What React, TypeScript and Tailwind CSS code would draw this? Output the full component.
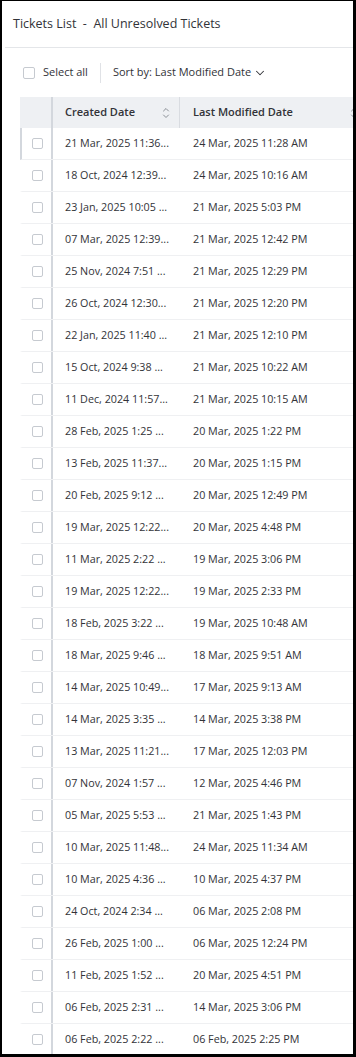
import { ChevronDown } from "lucide-react";

// created date is shown cut off in the list, as in the app
const rows: [string, string][] = [
  ["21 Mar, 2025 11:36...", "24 Mar, 2025 11:28 AM"],
  ["18 Oct, 2024 12:39...", "24 Mar, 2025 10:16 AM"],
  ["23 Jan, 2025 10:05 ...", "21 Mar, 2025 5:03 PM"],
  ["07 Mar, 2025 12:39...", "21 Mar, 2025 12:42 PM"],
  ["25 Nov, 2024 7:51 ...", "21 Mar, 2025 12:29 PM"],
  ["26 Oct, 2024 12:30...", "21 Mar, 2025 12:20 PM"],
  ["22 Jan, 2025 11:40 ...", "21 Mar, 2025 12:10 PM"],
  ["15 Oct, 2024 9:38 ...", "21 Mar, 2025 10:22 AM"],
  ["11 Dec, 2024 11:57...", "21 Mar, 2025 10:15 AM"],
  ["28 Feb, 2025 1:25 ...", "20 Mar, 2025 1:22 PM"],
  ["13 Feb, 2025 11:37...", "20 Mar, 2025 1:15 PM"],
  ["20 Feb, 2025 9:12 ...", "20 Mar, 2025 12:49 PM"],
  ["19 Mar, 2025 12:22...", "20 Mar, 2025 4:48 PM"],
  ["11 Mar, 2025 2:22 ...", "19 Mar, 2025 3:06 PM"],
  ["19 Mar, 2025 12:22...", "19 Mar, 2025 2:33 PM"],
  ["18 Feb, 2025 3:22 ...", "19 Mar, 2025 10:48 AM"],
  ["18 Mar, 2025 9:46 ...", "18 Mar, 2025 9:51 AM"],
  ["14 Mar, 2025 10:49...", "17 Mar, 2025 9:13 AM"],
  ["14 Mar, 2025 3:35 ...", "14 Mar, 2025 3:38 PM"],
  ["13 Mar, 2025 11:21...", "17 Mar, 2025 12:03 PM"],
  ["07 Nov, 2024 1:57 ...", "12 Mar, 2025 4:46 PM"],
  ["05 Mar, 2025 5:53 ...", "21 Mar, 2025 1:43 PM"],
  ["10 Mar, 2025 11:48...", "24 Mar, 2025 11:34 AM"],
  ["10 Mar, 2025 4:36 ...", "10 Mar, 2025 4:37 PM"],
  ["24 Oct, 2024 2:34 ...", "06 Mar, 2025 2:08 PM"],
  ["26 Feb, 2025 1:00 ...", "06 Mar, 2025 12:24 PM"],
  ["11 Feb, 2025 1:52 ...", "20 Mar, 2025 4:51 PM"],
  ["06 Feb, 2025 2:31 ...", "14 Mar, 2025 3:06 PM"],
  ["06 Feb, 2025 2:22 ...", "06 Feb, 2025 2:25 PM"],
];

function SortIcon() {
  return (
    <svg width="8" height="12" viewBox="0 0 8 12" fill="none" stroke="#8a8f96" strokeWidth="1" strokeLinecap="round" strokeLinejoin="round">
      <path d="M1.5 4 L4 1.5 L6.5 4" />
      <path d="M1.5 8 L4 10.5 L6.5 8" />
    </svg>
  );
}

function Box({ size = "w-[11px] h-[11px]" }: { size?: string }) {
  return <div className={`${size} border border-[#c6cad0] rounded-[2px] bg-white`} />;
}

export default function App() {
  return (
    <div
      className="w-[356px] h-[1057px] overflow-hidden bg-white border-l-2 border-t border-r-[3px] border-b-[3px] border-black text-[#323338]"
      style={{ fontFamily: '"Open Sans", "Noto Sans", sans-serif' }}
    >
      {/* Title */}
      <div className="h-[46px] flex items-center pl-[11px]">
        <h1 className="text-[12.5px] whitespace-pre">Tickets List  -  All Unresolved Tickets</h1>
      </div>
      <div className="ml-[3px] h-px bg-[#e4e6e9]" />

      {/* Toolbar */}
      <div className="h-[49px] flex items-center pl-[21px]">
        <Box size="w-[12px] h-[12px]" />
        <span className="ml-[8px] text-[11px]">Select all</span>
        <div className="ml-[12px] w-px h-[20px] bg-[#e0e2e6]" />
        <span className="ml-[12px] text-[11px]">Sort by: Last Modified Date</span>
        <ChevronDown className="ml-[2px] w-[14px] h-[14px] text-[#323338]" strokeWidth={1.75} />
      </div>

      {/* Table */}
      <div className="ml-[18px] w-[400px]">
        {/* Header */}
        <div className="h-[31px] flex bg-[#eef0f3] text-[11px] font-semibold">
          <div className="w-[31px]" />
          <div className="w-[2px] bg-[#d3d7dd]" />
          <div className="w-[127px] flex items-center justify-between pl-[12px] pr-[9px] border-r border-[#d9dce1]">
            <span>Created Date</span>
            <SortIcon />
          </div>
          <div className="w-[180px] flex items-center justify-between pl-[13px] pr-[2px]">
            <span>Last Modified Date</span>
            <SortIcon />
          </div>
        </div>

        {/* Rows */}
        {rows.map(([created, modified], i) => (
          <div
            key={i}
            className={`h-[32px] flex border-b border-[#eff0f2] text-[10.75px] ${i === 0 ? "border-l-2 border-l-[#d3d7dd]" : "border-l-2 border-l-transparent"}`}
          >
            <div className="w-[29px] flex items-center justify-center">
              <div className="ml-[1px]">
                <Box />
              </div>
            </div>
            <div className="w-[2px] bg-[#d3d7dd]" />
            <div className="w-[127px] flex items-center pl-[12px]">
              <span className="whitespace-nowrap">{created}</span>
            </div>
            <div className="flex-1 flex items-center pl-[13px]">
              <span className="whitespace-nowrap">{modified}</span>
            </div>
          </div>
        ))}
      </div>
    </div>
  );
}
